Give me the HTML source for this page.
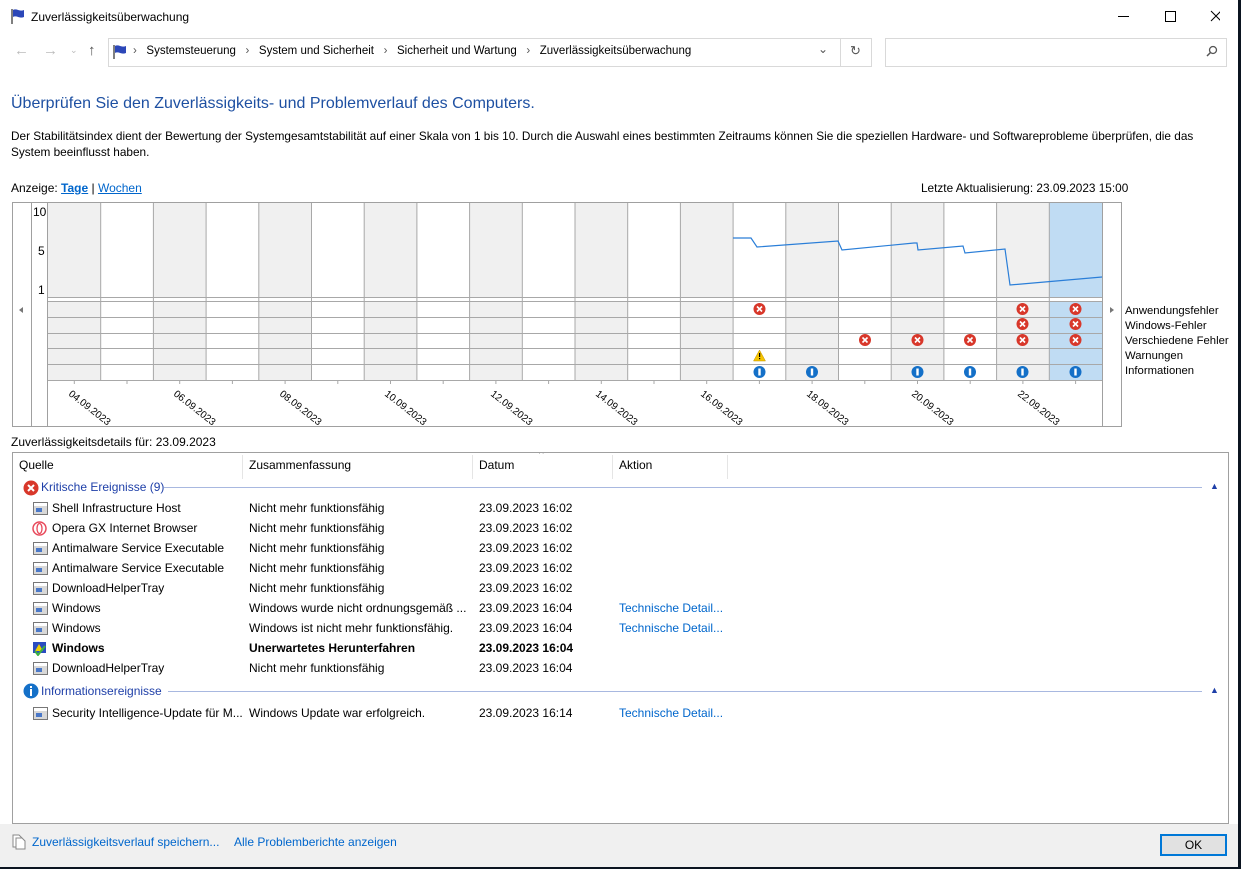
<!DOCTYPE html>
<html><head><meta charset="utf-8"><style>
*{margin:0;padding:0;box-sizing:border-box}
body{width:1241px;height:869px;background:#0b1420;position:relative;overflow:hidden;font-family:"Liberation Sans",sans-serif;font-size:12px;color:#000}
#win{position:absolute;left:0;top:0;width:1238px;height:867px;background:#fff}
.a{position:absolute;white-space:nowrap}
.lnk{color:#0066cc}
.row{position:absolute;left:0;height:20px;line-height:20px;width:1200px}
.row span{position:absolute}
.ic{display:inline-block;width:15px;height:13px;border:1px solid #777;background:linear-gradient(#fff 0 3px,#d8d8d8 3px);position:absolute;left:20px;top:4px}
.ic:after{content:"";position:absolute;left:2px;top:5px;width:6px;height:4px;background:#4a78c8}
</style></head><body>
<div id="win">
<!-- title -->
<svg class="a" style="left:10px;top:8px" width="16" height="16"><path d="M2 1v15" stroke="#555" stroke-width="1.5"/><path d="M3 2c4-2 6 2 11 0v7c-5 2-7-2-11 0z" fill="#2c47b8"/></svg>
<div class="a" style="left:31px;top:10px;font-size:12px">Zuverlässigkeitsüberwachung</div>
<svg class="a" style="left:1110px;top:8px" width="110" height="16"><path d="M8 8.5h11" stroke="#000"/><path d="M55.5 3.5h10v10h-10z" fill="none" stroke="#000"/><path d="M101 3l10 10M111 3l-10 10" stroke="#000"/></svg>
<!-- nav -->
<div class="a" style="left:14px;top:42px;color:#bbb;font-size:15px">←</div>
<div class="a" style="left:43px;top:42px;color:#bbb;font-size:15px">→</div>
<div class="a" style="left:70px;top:45px;color:#bbb;font-size:9px">⌄</div>
<div class="a" style="left:88px;top:42px;color:#555;font-size:15px">↑</div>
<div class="a" style="left:108px;top:38px;width:764px;height:29px;border:1px solid #d9d9d9"></div>
<div class="a" style="left:840px;top:38px;width:1px;height:29px;background:#d9d9d9"></div>
<svg class="a" style="left:112px;top:44px" width="16" height="16"><path d="M2 1v14" stroke="#555" stroke-width="1.5"/><path d="M3 2c4-2 6 2 11 0v7c-5 2-7-2-11 0z" fill="#2c47b8"/></svg>
<div class="a" style="left:133px;top:45px;color:#555;font-size:11.5px">›&nbsp;&nbsp;&nbsp;<span style="color:#000">Systemsteuerung</span>&nbsp;&nbsp;&nbsp;›&nbsp;&nbsp;&nbsp;<span style="color:#000">System und Sicherheit</span>&nbsp;&nbsp;&nbsp;›&nbsp;&nbsp;&nbsp;<span style="color:#000">Sicherheit und Wartung</span>&nbsp;&nbsp;&nbsp;›&nbsp;&nbsp;&nbsp;<span style="color:#000">Zuverlässigkeitsüberwachung</span></div>
<div class="a" style="left:818px;top:42px;color:#555;font-size:12px">⌄</div>
<div class="a" style="left:850px;top:43px;color:#555;font-size:13px">↻</div>
<div class="a" style="left:885px;top:38px;width:342px;height:29px;border:1px solid #d9d9d9"></div>
<svg class="a" style="left:1206px;top:45px" width="12" height="12"><circle cx="7" cy="5" r="3.5" fill="none" stroke="#555" stroke-width="1.3"/><path d="M4.5 7.5L1 11" stroke="#555" stroke-width="1.5"/></svg>
<!-- heading -->
<div class="a" style="left:11px;top:95px;font-size:16px;color:#1e50a2">Überprüfen Sie den Zuverlässigkeits- und Problemverlauf des Computers.</div>
<div class="a" style="left:11px;top:128px;line-height:16px;white-space:normal;width:1215px;font-size:11.8px">Der Stabilitätsindex dient der Bewertung der Systemgesamtstabilität auf einer Skala von 1 bis 10. Durch die Auswahl eines bestimmten Zeitraums können Sie die speziellen Hardware- und Softwareprobleme überprüfen, die das System beeinflusst haben.</div>
<div class="a" style="left:11px;top:181px">Anzeige: <b class="lnk" style="text-decoration:underline">Tage</b> | <span class="lnk" style="text-decoration:underline">Wochen</span></div>
<div class="a" style="left:921px;top:181px;font-size:11.8px">Letzte Aktualisierung: 23.09.2023 15:00</div>
<!-- chart -->
<svg class="a" style="left:0;top:0" width="1238" height="440" font-family="Liberation Sans" font-size="11">
<rect x="12.5" y="202.5" width="1109" height="224" fill="#fff" stroke="#a0a0a0"/>
<line x1="31.5" y1="203" x2="31.5" y2="426" stroke="#a0a0a0"/>
<line x1="47.5" y1="203" x2="47.5" y2="426" stroke="#a0a0a0"/>
<line x1="1102.5" y1="203" x2="1102.5" y2="426" stroke="#a0a0a0"/>
<g fill="#f0f0f0">
<rect x="48" y="203" width="53" height="94"/><rect x="48" y="302" width="53" height="78"/>
<rect x="153.4" y="203" width="52.7" height="94"/><rect x="153.4" y="302" width="52.7" height="78"/>
<rect x="258.8" y="203" width="52.7" height="94"/><rect x="258.8" y="302" width="52.7" height="78"/>
<rect x="364.2" y="203" width="52.7" height="94"/><rect x="364.2" y="302" width="52.7" height="78"/>
<rect x="469.6" y="203" width="52.7" height="94"/><rect x="469.6" y="302" width="52.7" height="78"/>
<rect x="575" y="203" width="52.7" height="94"/><rect x="575" y="302" width="52.7" height="78"/>
<rect x="680.4" y="203" width="52.7" height="94"/><rect x="680.4" y="302" width="52.7" height="78"/>
<rect x="785.8" y="203" width="52.7" height="94"/><rect x="785.8" y="302" width="52.7" height="78"/>
<rect x="891.2" y="203" width="52.7" height="94"/><rect x="891.2" y="302" width="52.7" height="78"/>
<rect x="996.6" y="203" width="52.7" height="94"/><rect x="996.6" y="302" width="52.7" height="78"/>
</g>
<rect x="1049.3" y="203" width="52.7" height="94" fill="#c0dcf3"/><rect x="1049.3" y="302" width="52.7" height="78" fill="#c0dcf3"/>
<g stroke="#a8a8a8">
<path d="M100.7 203V380M153.4 203V380M206.1 203V380M258.8 203V380M311.5 203V380M364.2 203V380M416.9 203V380M469.6 203V380M522.3 203V380M575 203V380M627.7 203V380M680.4 203V380M733.1 203V380M785.8 203V380M838.5 203V380M891.2 203V380M943.9 203V380M996.6 203V380M1049.3 203V380"/>
<path d="M48 297.5H1102M48 301.5H1102M48 317.5H1102M48 333.5H1102M48 348.5H1102M48 364.5H1102M48 380.5H1102"/>
<path d="M74.3 380v4M127 380v4M179.7 380v4M232.4 380v4M285.1 380v4M337.8 380v4M390.5 380v4M443.2 380v4M495.9 380v4M548.6 380v4M601.3 380v4M654 380v4M706.7 380v4M759.4 380v4M812.1 380v4M864.8 380v4M917.5 380v4M970.2 380v4M1022.9 380v4M1075.6 380v4"/>
</g>
<text x="33" y="216" font-size="12">10</text><text x="38" y="255" font-size="12">5</text><text x="38" y="294" font-size="12">1</text>
<path d="M19 310l4-3v6z" fill="#777"/><path d="M1110 307l4 3-4 3z" fill="#777"/>
<polyline points="733,238 751,238 757,247 838,241 842,250 914,243 917,243 918,250 963,246 965,253 1005,249 1010,285 1102,277" fill="none" stroke="#2a7ed8" stroke-width="1.2"/>
<g font-size="10" fill="#000">
<text transform="translate(68,395) rotate(38)">04.09.2023</text>
<text transform="translate(173,395) rotate(38)">06.09.2023</text>
<text transform="translate(279,395) rotate(38)">08.09.2023</text>
<text transform="translate(384,395) rotate(38)">10.09.2023</text>
<text transform="translate(490,395) rotate(38)">12.09.2023</text>
<text transform="translate(595,395) rotate(38)">14.09.2023</text>
<text transform="translate(700,395) rotate(38)">16.09.2023</text>
<text transform="translate(806,395) rotate(38)">18.09.2023</text>
<text transform="translate(911,395) rotate(38)">20.09.2023</text>
<text transform="translate(1017,395) rotate(38)">22.09.2023</text>
</g>
<defs>
<g id="er"><circle r="6" fill="#d8372a"/><path d="M-2.5-2.5L2.5 2.5M2.5-2.5L-2.5 2.5" stroke="#fff" stroke-width="1.6"/></g>
<g id="inf"><circle r="6" fill="#1470c8"/><rect x="-1.2" y="-3.5" width="2.4" height="7" fill="#fff"/></g>
</defs>
<use href="#er" x="759.5" y="309"/><use href="#er" x="1022.5" y="309"/><use href="#er" x="1075.5" y="309"/>
<use href="#er" x="1022.5" y="324"/><use href="#er" x="1075.5" y="324"/>
<use href="#er" x="865" y="340"/><use href="#er" x="917.5" y="340"/><use href="#er" x="970" y="340"/><use href="#er" x="1022.5" y="340"/><use href="#er" x="1075.5" y="340"/>
<path d="M759.5 350l6 11h-12z" fill="#f5c400" stroke="#c09000" stroke-width=".5"/><rect x="759" y="353" width="1.2" height="4"/><rect x="759" y="358" width="1.2" height="1.2"/>
<use href="#inf" x="759.5" y="372"/><use href="#inf" x="812" y="372"/><use href="#inf" x="917.5" y="372"/><use href="#inf" x="970" y="372"/><use href="#inf" x="1022.5" y="372"/><use href="#inf" x="1075.5" y="372"/>
<g font-size="11.3"><text x="1125" y="314">Anwendungsfehler</text><text x="1125" y="329">Windows-Fehler</text><text x="1125" y="344">Verschiedene Fehler</text><text x="1125" y="359">Warnungen</text><text x="1125" y="374">Informationen</text></g>
</svg>
<div class="a" style="left:11px;top:435px">Zuverlässigkeitsdetails für: 23.09.2023</div>
<!-- table -->
<div class="a" style="left:12px;top:452px;width:1217px;height:372px;border:1px solid #a0a0a0;overflow:hidden">
 <div class="a" style="left:6px;top:5px">Quelle</div>
 <div class="a" style="left:229px;top:2px;width:1px;height:24px;background:#e5e5e5"></div>
 <div class="a" style="left:236px;top:5px">Zusammenfassung</div>
 <div class="a" style="left:459px;top:2px;width:1px;height:24px;background:#e5e5e5"></div>
 <div class="a" style="left:466px;top:5px">Datum</div>
 <div class="a" style="left:526px;top:-4px;color:#777;font-size:10px">^</div>
 <div class="a" style="left:599px;top:2px;width:1px;height:24px;background:#e5e5e5"></div>
 <div class="a" style="left:606px;top:5px">Aktion</div>
 <div class="a" style="left:714px;top:2px;width:1px;height:24px;background:#e5e5e5"></div>
 <svg class="a" style="left:10px;top:27px" width="16" height="16"><circle cx="8" cy="8" r="7.5" fill="#d8372a"/><path d="M5 5l6 6M11 5l-6 6" stroke="#fff" stroke-width="2"/></svg>
 <div class="a" style="left:28px;top:27px;color:#1e3fa8">Kritische Ereignisse (9)</div>
 <div class="a" style="left:151px;top:34px;width:1038px;height:1px;background:#a8b8e0"></div>
 <div class="a" style="left:1197px;top:28px;color:#1e3fa8;font-size:9px">▲</div>
 <div class="row" style="top:45px"><i class="ic"></i><span style="left:39px">Shell Infrastructure Host</span><span style="left:236px">Nicht mehr funktionsfähig</span><span style="left:466px">23.09.2023 16:02</span></div>
 <div class="row" style="top:65px"><svg style="position:absolute;left:19px;top:3px" width="15" height="15"><ellipse cx="7.5" cy="7.5" rx="6.5" ry="6.5" fill="none" stroke="#e8495b" stroke-width="1.5"/><ellipse cx="7.5" cy="7.5" rx="2.5" ry="5" fill="none" stroke="#e8495b" stroke-width="1.3"/></svg><span style="left:39px">Opera GX Internet Browser</span><span style="left:236px">Nicht mehr funktionsfähig</span><span style="left:466px">23.09.2023 16:02</span></div>
 <div class="row" style="top:85px"><i class="ic"></i><span style="left:39px">Antimalware Service Executable</span><span style="left:236px">Nicht mehr funktionsfähig</span><span style="left:466px">23.09.2023 16:02</span></div>
 <div class="row" style="top:105px"><i class="ic"></i><span style="left:39px">Antimalware Service Executable</span><span style="left:236px">Nicht mehr funktionsfähig</span><span style="left:466px">23.09.2023 16:02</span></div>
 <div class="row" style="top:125px"><i class="ic"></i><span style="left:39px">DownloadHelperTray</span><span style="left:236px">Nicht mehr funktionsfähig</span><span style="left:466px">23.09.2023 16:02</span></div>
 <div class="row" style="top:145px"><i class="ic"></i><span style="left:39px">Windows</span><span style="left:236px">Windows wurde nicht ordnungsgemäß ...</span><span style="left:466px">23.09.2023 16:04</span><span class="lnk" style="left:606px">Technische Detail...</span></div>
 <div class="row" style="top:165px"><i class="ic"></i><span style="left:39px">Windows</span><span style="left:236px">Windows ist nicht mehr funktionsfähig.</span><span style="left:466px">23.09.2023 16:04</span><span class="lnk" style="left:606px">Technische Detail...</span></div>
 <div class="row" style="top:185px;font-weight:bold"><svg style="position:absolute;left:19px;top:3px" width="15" height="15"><rect x="1" y="1" width="13" height="11" fill="#2a4cc0"/><path d="M7 3l4 7H3z" fill="#f2d000"/><path d="M3 10l3 4 7-9" fill="none" stroke="#3cb043" stroke-width="2"/></svg><span style="left:39px">Windows</span><span style="left:236px">Unerwartetes Herunterfahren</span><span style="left:466px">23.09.2023 16:04</span></div>
 <div class="row" style="top:205px"><i class="ic"></i><span style="left:39px">DownloadHelperTray</span><span style="left:236px">Nicht mehr funktionsfähig</span><span style="left:466px">23.09.2023 16:04</span></div>
 <svg class="a" style="left:10px;top:230px" width="16" height="16"><circle cx="8" cy="8" r="7.5" fill="#1470c8"/><rect x="7" y="3" width="2" height="2" fill="#fff"/><rect x="7" y="6" width="2" height="7" fill="#fff"/></svg>
 <div class="a" style="left:28px;top:231px;color:#1e3fa8">Informationsereignisse</div>
 <div class="a" style="left:155px;top:238px;width:1034px;height:1px;background:#a8b8e0"></div>
 <div class="a" style="left:1197px;top:232px;color:#1e3fa8;font-size:9px">▲</div>
 <div class="row" style="top:250px"><i class="ic"></i><span style="left:39px">Security Intelligence-Update für M...</span><span style="left:236px">Windows Update war erfolgreich.</span><span style="left:466px">23.09.2023 16:14</span><span class="lnk" style="left:606px">Technische Detail...</span></div>
</div>
<!-- footer -->
<div class="a" style="left:0;top:824px;width:1238px;height:43px;background:#f0f0f0"></div>
<svg class="a" style="left:12px;top:834px" width="14" height="16"><path d="M1 1h6l3 3v9H1z" fill="#fff" stroke="#888"/><path d="M4 4h6l3 3v8H4z" fill="#fff" stroke="#888"/></svg>
<div class="a lnk" style="left:32px;top:835px">Zuverlässigkeitsverlauf speichern...</div>
<div class="a lnk" style="left:234px;top:835px">Alle Problemberichte anzeigen</div>
<div class="a" style="left:1160px;top:834px;width:67px;height:22px;border:2px solid #0078d7;background:#e1e1e1;text-align:center;line-height:18px">OK</div>
</div>
</body></html>
